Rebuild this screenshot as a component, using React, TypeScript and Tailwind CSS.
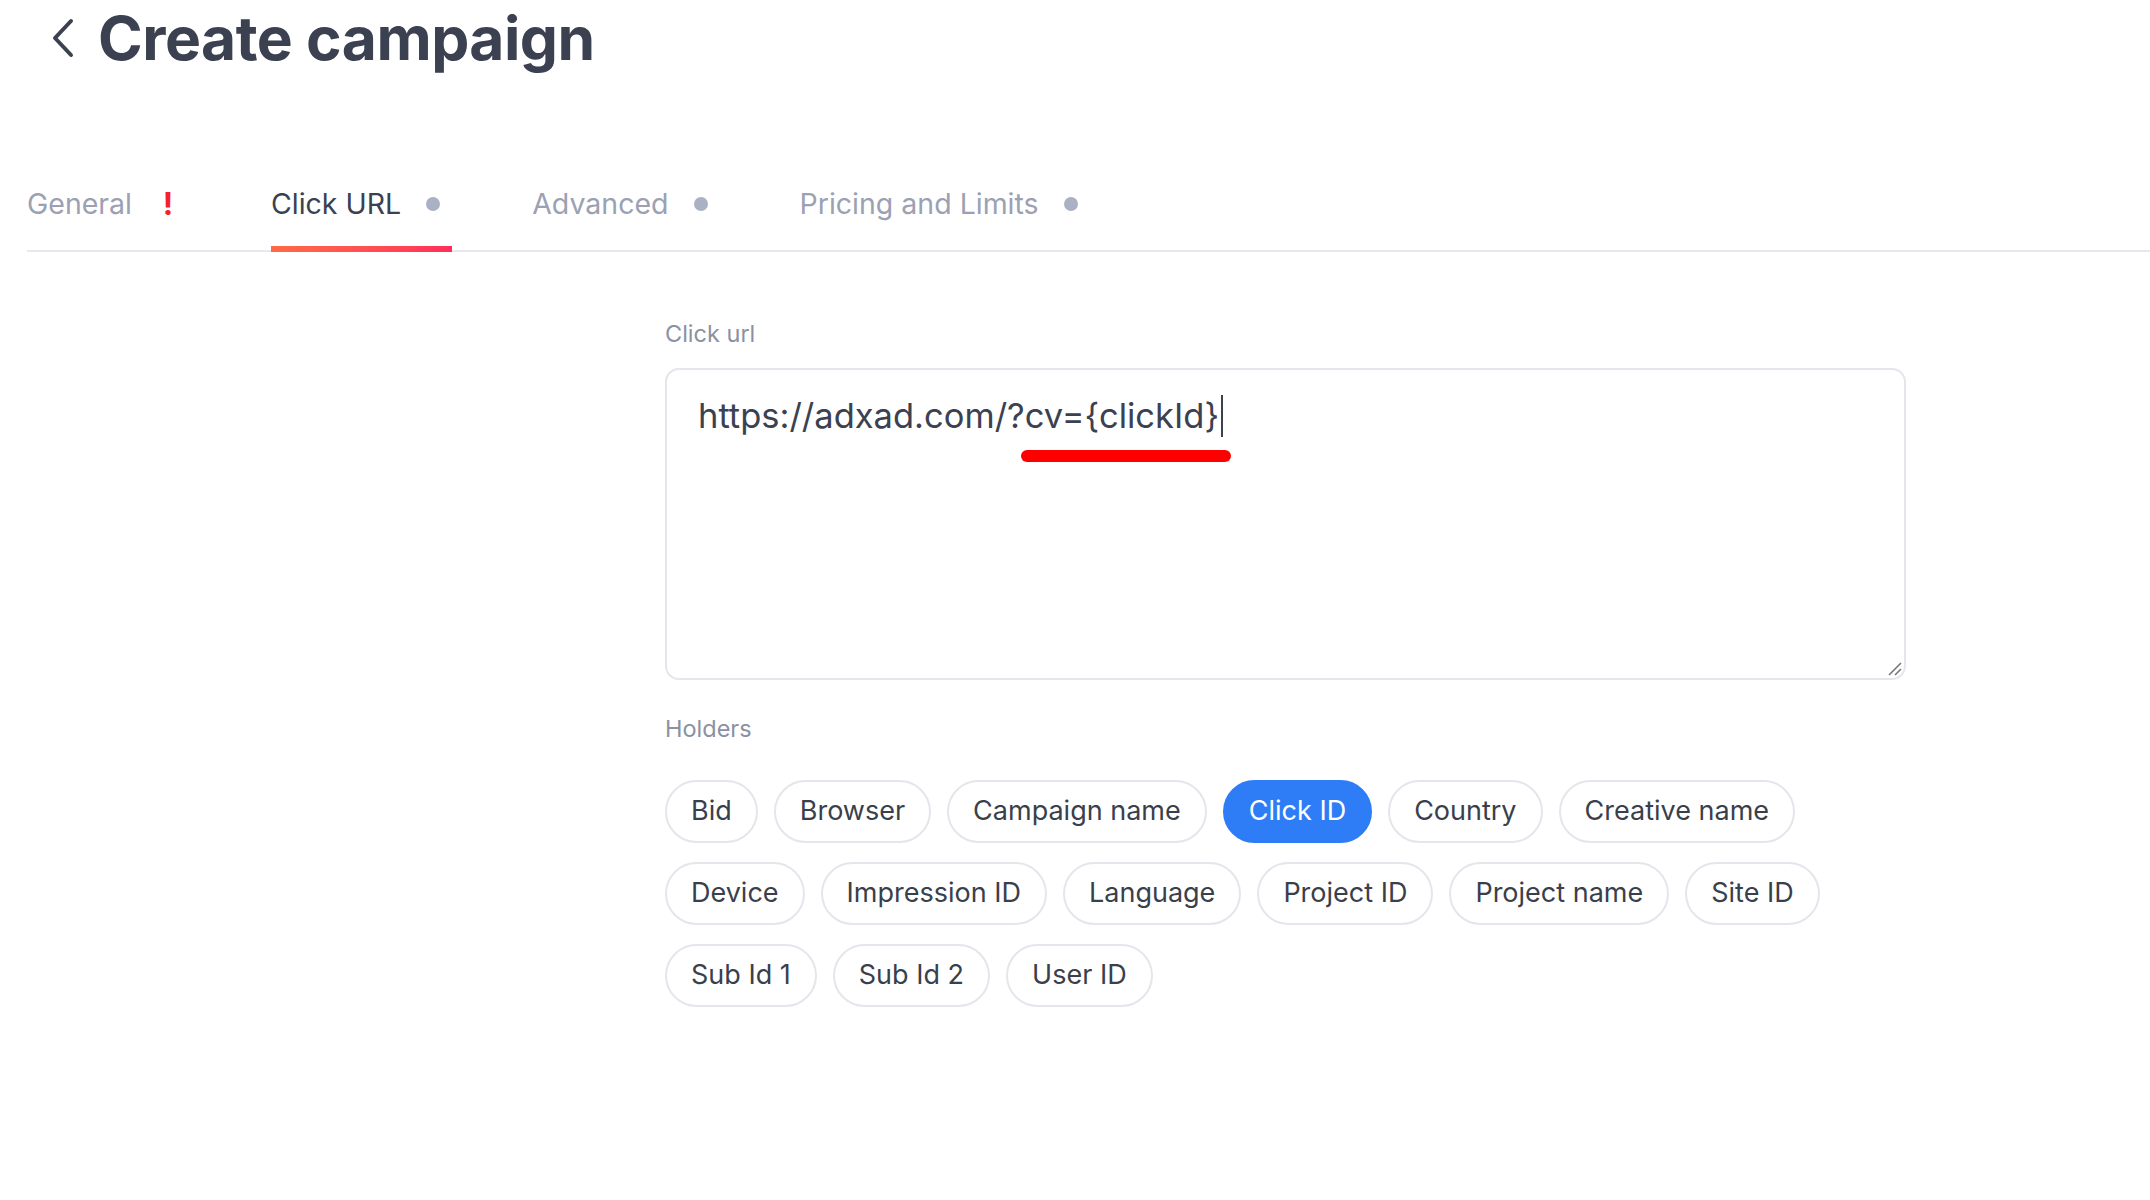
const rows: string[][] = [
  ['Bid', 'Browser', 'Campaign name', 'Click ID', 'Country', 'Creative name'],
  ['Device', 'Impression ID', 'Language', 'Project ID', 'Project name', 'Site ID'],
  ['Sub Id 1', 'Sub Id 2', 'User ID'],
];

const tabs = [
  { key: 'general', label: 'General', mark: 'error' },
  { key: 'click', label: 'Click URL', mark: 'dot' },
  { key: 'advanced', label: 'Advanced', mark: 'dot' },
  { key: 'pricing', label: 'Pricing and Limits', mark: 'dot' },
];

export default function App() {
  const active = 'click';
  const selected = 'Click ID';

  return (
    <div className="min-h-[1200px] w-[2150px] bg-white font-['Inter',sans-serif] text-[#3b4150]">
      <header className="flex h-[76px] items-center gap-[24px] pl-[52px]">
        <svg width="22" height="40" viewBox="0 0 22 40" fill="none" stroke="#3b4150" strokeWidth="4" strokeLinecap="round" strokeLinejoin="round">
          <path d="M19 3 L3 20 L19 37" />
        </svg>
        <h1 className="text-[60.5px] font-bold leading-none tracking-[-0.5px]">Create campaign</h1>
      </header>

      <nav className="ml-[27px] mt-[110px] flex gap-[80px] border-b-2 border-[#e6e8ee]">
        {tabs.map((t) => {
          const isActive = t.key === active;
          return (
            <div
              key={t.key}
              className={`relative -mb-[2px] flex items-center gap-[25px] pb-[30px] pr-[12px] ${
                isActive ? 'text-[#3b4150]' : 'text-[#9ba1b3]'
              }`}
            >
              <span className="text-[28.5px] leading-[36px]">{t.label}</span>
              {t.mark === 'error' ? (
                <span className="w-[22px] text-center text-[31px] font-bold leading-[36px] text-[#f5222d]">!</span>
              ) : (
                <span className="h-[14px] w-[14px] rounded-full bg-[#aab1c4]" />
              )}
              {isActive && (
                <span className="absolute bottom-0 left-0 right-0 h-[6px] bg-gradient-to-r from-[#ff6a45] to-[#ff2e5a]" />
              )}
            </div>
          );
        })}
      </nav>

      <main className="ml-[665px] w-[1241px] pt-[66px]">
        <label className="block text-[23.5px] leading-[32px] text-[#8b91a1]">Click url</label>

        <div className="relative mt-[18px] h-[312px] rounded-[14px] border-2 border-[#e4e6ec] px-[31px] pt-[22px]">
          <p className="flex items-center text-[34.5px] leading-[48px] text-[#3b4150]">
            https://adxad.com/?cv={'{clickId}'}
            <span className="ml-[2px] inline-block h-[42px] w-[2px] bg-[#3b4150]" />
          </p>
          <span className="absolute left-[354px] top-[80px] h-[12px] w-[210px] rounded-full bg-[#ff0000]" />
          <svg
            className="absolute bottom-[2px] right-[2px]"
            width="16"
            height="16"
            viewBox="0 0 16 16"
            fill="none"
            stroke="#777"
            strokeWidth="1.6"
          >
            <path d="M3 15 L15 3" />
            <path d="M9 15 L15 9" />
          </svg>
        </div>

        <label className="mt-[33px] block text-[23.5px] leading-[32px] text-[#8b91a1]">Holders</label>

        <div className="mt-[35px] flex flex-col gap-[19px]">
          {rows.map((row, i) => (
            <div key={i} className="flex gap-[16px]">
              {row.map((name) => {
                const on = name === selected;
                return (
                  <button
                    key={name}
                    className={`h-[63px] rounded-full border-2 px-[24px] text-[27px] ${
                      on
                        ? 'border-[#2e7cf6] bg-[#2e7cf6] text-white'
                        : 'border-[#e4e6ec] bg-white text-[#3a3f4c]'
                    }`}
                  >
                    {name}
                  </button>
                );
              })}
            </div>
          ))}
        </div>
      </main>
    </div>
  );
}
